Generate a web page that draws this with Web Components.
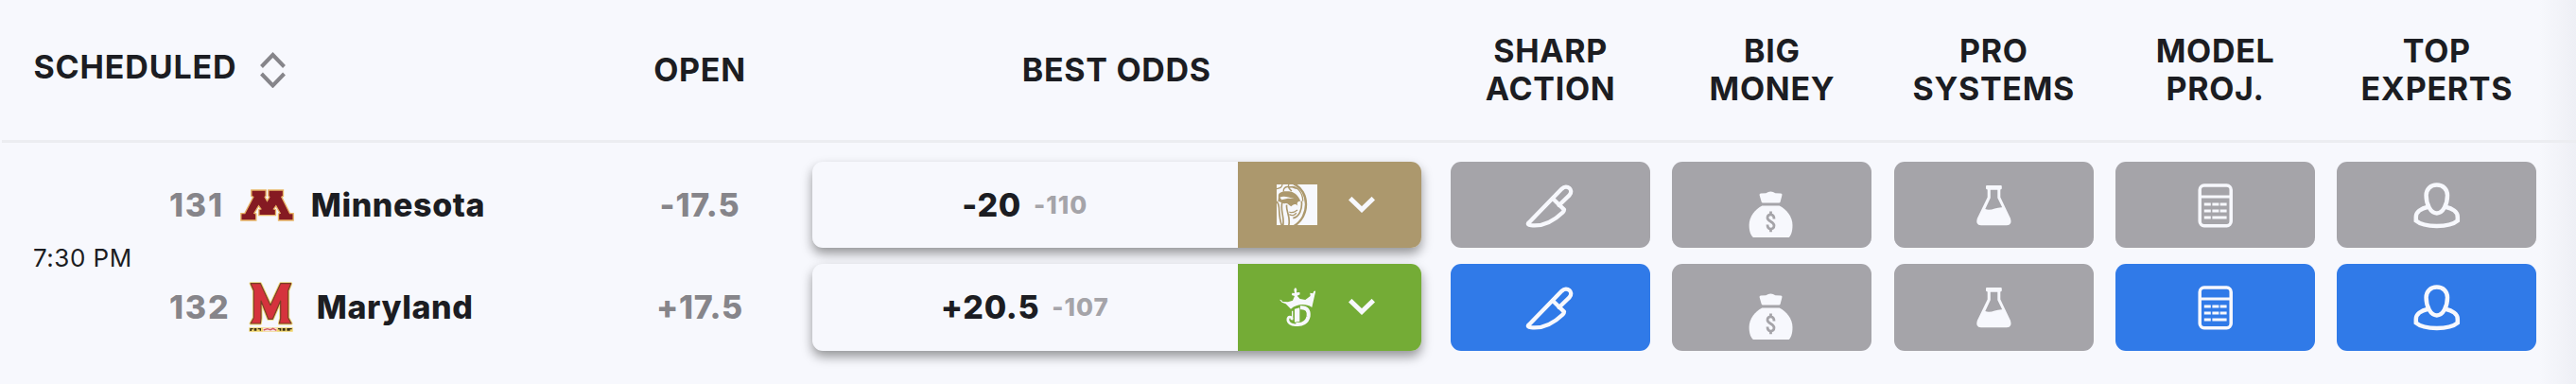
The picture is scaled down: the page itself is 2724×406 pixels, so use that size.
<!DOCTYPE html>
<html lang="en">
<head>
<meta charset="utf-8">
<title>Odds</title>
<style>
  body {
    margin: 0;
    background: #f7f8fd;
    color: #1c1d22;
    font-family: Inter, "Liberation Sans", sans-serif;
    overflow: hidden;
  }
</style>
</head>
<body>
<odds-board>
  <column-head slot="head" align="left" sortable>SCHEDULED</column-head>
  <column-head slot="head">OPEN</column-head>
  <column-head slot="head">BEST ODDS</column-head>
  <column-head slot="head">SHARP<br>ACTION</column-head>
  <column-head slot="head">BIG<br>MONEY</column-head>
  <column-head slot="head">PRO<br>SYSTEMS</column-head>
  <column-head slot="head">MODEL<br>PROJ.</column-head>
  <column-head slot="head">TOP<br>EXPERTS</column-head>

  <game-time>7:30 PM</game-time>

  <team-name number="131" logo="minnesota">Minnesota</team-name>
  <open-line>-17.5</open-line>
  <best-odds line="-20" price="-110" book="betmgm"></best-odds>
  <signal-tile icon="knife"></signal-tile>
  <signal-tile icon="bag"></signal-tile>
  <signal-tile icon="flask"></signal-tile>
  <signal-tile icon="calculator"></signal-tile>
  <signal-tile icon="person"></signal-tile>

  <team-name number="132" logo="maryland">Maryland</team-name>
  <open-line>+17.5</open-line>
  <best-odds line="+20.5" price="-107" book="draftkings"></best-odds>
  <signal-tile icon="knife" active></signal-tile>
  <signal-tile icon="bag"></signal-tile>
  <signal-tile icon="flask"></signal-tile>
  <signal-tile icon="calculator" active></signal-tile>
  <signal-tile icon="person" active></signal-tile>
</odds-board>

<script>
const ICONS = {
  knife: `
    <g fill="none" stroke="currentColor" stroke-width="4.3" stroke-linejoin="round" stroke-linecap="round">
      <path d="M8.4 50.8 L43.6 14.6 C49 9.4 56.6 15.6 51.6 21.4 L40.6 32"/>
      <path d="M34 25 L46 36.6 Q46 38 44.6 39.4 C34 49.6 22 54.4 11 53.2 C8 52.8 7.4 51.8 8.4 50.8"/>
    </g>`,
  bag: `
    <path fill="currentColor" d="M20 19.4 L25.4 19.2 Q30.4 15.6 35.4 19.2 L41 19.4 Q43 19.6 42.4 21.4 L40.6 28.4 Q40.3 29.5 39.2 29.5 L22 29.5 Q21 29.5 20.7 28.4 L18.6 21.2 Q18.3 19.4 20 19.4Z"/>
    <path fill="currentColor" d="M21.4 32.4 H39.6 C47 36 53.5 44 53.5 53 C53.5 59.5 52 64 49.6 66 H12 C9.4 64 7.6 59.5 7.6 53 C7.6 44 14 36 21.4 32.4Z"/>
    <path fill="none" stroke="var(--tile)" stroke-width="2.8" d="M30.5 38.6 V42 M30.5 56.8 V60.2 M34 46.4 C34 40.6 27 40.6 27 45.2 C27 49.4 34 49.2 34 53.6 C34 58.4 27 58.4 27 52.4"/>`,
  flask: `
    <path fill="currentColor" fill-rule="evenodd" d="M25 11 H39.8 Q40.8 11 40.8 12 V14.2 Q40.8 15.2 39.3 15.4 V23.4 L50 46 Q52.2 53 46 53.2 H18.8 Q12.6 53 14.8 46 L25.7 23.4 V15.4 Q24 15.2 24 14.2 V12 Q24 11 25 11Z M28.8 15.8 V24.2 L23.3 36 C29 38.6 34.4 33.8 41.2 34.2 L36.3 24.2 V15.8Z"/>`,
  calculator: `
    <rect x="15.2" y="11.1" width="33" height="42.6" rx="4.6" fill="none" stroke="currentColor" stroke-width="3.5"/>
    <path fill="currentColor" d="M15 21.4 H48 V24.4 H15Z M19.8 29.4 h7 v3 h-7z m8.6 0 h7 v3 h-7z m8.2 0 h7 v3 h-7z M19.8 36.4 h7 v3 h-7z m8.6 0 h7 v3 h-7z m8.2 0 h7 v3 h-7z M19.8 43.4 h7 v3 h-7z m8.6 0 h15.2 v3 h-15.2z"/>`,
  person: `
    <g fill="none" stroke="currentColor" stroke-width="4.5">
      <path d="M31.8 10.6 C38.4 10.6 43 15 43 21.6 C43 31 38.4 40.4 31.8 40.4 C25.2 40.4 20.6 31 20.6 21.6 C20.6 15 25.2 10.6 31.8 10.6Z"/>
      <path d="M22.6 33.8 C15 35.4 9.8 39.4 9.8 44.4 V48.4 C14 52 22 54 31.8 54 C41.6 54 49.6 52 53.8 48.4 V44.4 C53.8 39.4 48.6 35.4 41 33.8"/>
    </g>`
};

const BOOKS = {
  betmgm: `
    <svg width="43.3" height="43.3" viewBox="150 105 130 130">
      <path fill="#f7f8fd" d="M150 105 H280 V235 H150Z"/>
      <g fill="none" stroke="#ac986d">
        <path stroke-width="7" d="M204 103 C256 126 256 208 205 237"/>
        <path stroke-width="4" d="M190 114 C216 106 234 134 233 158 M189 105 C185 112 190 120 198 126 M168 105 C167 114 162 116 150 119 M172 128 C170 110 190 108 212 118"/>
        <path stroke-width="5" d="M150 160 C164 168 152 200 167 237 M168 160 C160 190 176 206 170 237 M182 170 C178 190 196 206 188 237 M229 158 C232 184 222 208 202 212"/>
        <path stroke-width="4" d="M190 192 C200 198 208 192 216 186 M190 200 C200 206 210 202 212 195"/>
      </g>
      <path fill="#ac986d" d="M154 158 C158 142 152 138 160 132 C168 126 176 126 188 127 C204 128 218 138 226 158 C216 158 212 164 218 174 C210 164 202 168 196 175 C188 170 184 162 176 166 C168 166 164 160 154 158Z"/>
      <path fill="#f7f8fd" d="M160 146 C172 140 184 144 206 150 L186 149 L166 154Z"/>
    </svg>`,
  draftkings: `
    <svg width="38.3" height="41.3" viewBox="158 433 115 124">
      <path fill="#f7f8fd" d="M158 471 L164 473 L168 478 L185 479 L200 474 L206 460 L197 457 L198 450 L206 451 L204 439 L209 433 L213 439 L212 449 L222 448 L223 455 L214 459 L223 469 L240 472 L256 460 L255 450 L264 452 L267 445 L273 443 L268 465 L261 496 C240 482 212 486 194 501 L178 485 L166 480Z"/>
      <g fill="none" stroke="#f7f8fd">
        <path stroke-width="12" d="M224 497 C246 495 252 508 250 524 C246 544 230 552 210 550"/>
        <path stroke-width="8" d="M214 552 C194 554 182 544 185 531 C188 524 199 526 197 536"/>
        <path stroke-width="4" d="M199 507 V532"/>
      </g>
      <path fill="#f7f8fd" d="M206 501 L222 497 V541 L206 543Z"/>
    </svg>`
};

const LOGOS = {
  minnesota: `
    <svg width="57" height="34" viewBox="45.5 59 171 102">
      <path fill="#851a22" stroke="#e8b566" stroke-width="4" d="M81 62 H127 V81 L124 84 L131 96 L138 84 L135 81 V62 H182 V81 L177 84 L203 136 H214 V158 H167 V137 L172 135 L159 112 L152 122 L158 124 V142 H105 V124 L111 122 L104 112 L90 135 L96 137 V158 H48 V136 H60 L87 84 L81 81Z"/>
    </svg>`,
  maryland: `
    <svg width="47.4" height="53" viewBox="71 356 142 159">
      <g fill="#d5333d" stroke-linejoin="round">
        <path stroke="#ecd778" stroke-width="9" d="M77 361 H108 L140 430 L172 361 H205 L196 384 V470 L206 488 H168 L172 472 V416 L147 474 H133 L110 416 V472 L108 488 H77 L87 470 V384Z"/>
        <path stroke="#7a3f26" stroke-width="3.5" d="M77 361 H108 L140 430 L172 361 H205 L196 384 V470 L206 488 H168 L172 472 V416 L147 474 H133 L110 416 V472 L108 488 H77 L87 470 V384Z"/>
      </g>
      <path fill="#f0d468" d="M72 501 H211 V514 H72Z"/>
      <path fill="#3c3118" d="M75 503 h10 v4 h-5 v5 h-5z M88 503 h8 v8 h-8z M100 503 h10 v8 h-4 v-4 h-6z M164 503 h10 v8 h-5 v-4 h-5z M178 503 h9 v8 h-9z M192 503 h16 v4 h-6 v4 h-10z"/>
      <path fill="#f7e4e4" d="M116 502 H160 V513 H116Z"/>
      <path fill="none" stroke="#d5585c" stroke-width="4" d="M118 509 L130 505 L140 508 L148 504 L159 510"/>
    </svg>`
};

class OddsBoard extends HTMLElement {
  constructor() {
    super();
    this.attachShadow({ mode: 'open' }).innerHTML = `
      <style>
        :host {
          --columns: 639px 198px 683.5px repeat(5, 234.3px);
          display: block;
          height: 406px;
          padding-left: 2px;
          box-sizing: border-box;
          background: linear-gradient(to right, transparent 2684px, rgba(20, 22, 50, .04) 2724px);
        }
        header {
          display: grid;
          grid-template-columns: var(--columns);
          height: 148px;
          border-bottom: 3px solid #ecedf1;
        }
        .body {
          display: grid;
          grid-template-columns: 177px 462px 198px 683.5px repeat(5, 234.3px);
          grid-template-rows: 91.3px 91.3px;
          row-gap: 17px;
          padding-top: 20px;
        }
        ::slotted(game-time) {
          grid-row: 1 / span 2;
        }
      </style>
      <header><slot name="head"></slot></header>
      <div class="body"><slot></slot></div>
    `;
  }
}

class ColumnHead extends HTMLElement {
  constructor() {
    super();
    this.attachShadow({ mode: 'open' });
  }
  connectedCallback() {
    const sort = this.hasAttribute('sortable') ? `
      <svg width="27" height="38" viewBox="0 0 27 38" fill="none" stroke="#86858a" stroke-width="4">
        <path d="M1.5 15.5 L13.5 3 L25.5 15.5 M1.5 23 L13.5 35.5 L25.5 23"/>
      </svg>` : '';
    this.shadowRoot.innerHTML = `
      <style>
        :host {
          display: flex;
          align-items: center;
          justify-content: center;
          text-align: center;
          font-size: 34px;
          font-weight: 700;
          line-height: 40px;
          letter-spacing: .7px;
        }
        :host([align="left"]) {
          justify-content: flex-start;
          padding-left: 33.5px;
          gap: 24px;
        }
        :host([align="left"]) span {
          padding-bottom: 6px;
          letter-spacing: .85px;
        }
      </style>
      <span><slot></slot></span>${sort}
    `;
  }
}

class GameTime extends HTMLElement {
  constructor() {
    super();
    this.attachShadow({ mode: 'open' }).innerHTML = `
      <style>
        :host {
          display: flex;
          align-items: center;
          padding: 3px 0 0 33px;
          font-size: 26px;
          letter-spacing: .5px;
          white-space: nowrap;
        }
      </style>
      <slot></slot>
    `;
  }
}

class TeamName extends HTMLElement {
  constructor() {
    super();
    this.attachShadow({ mode: 'open' });
  }
  connectedCallback() {
    this.shadowRoot.innerHTML = `
      <style>
        :host {
          display: flex;
          align-items: center;
          font-size: 34px;
          font-weight: 800;
          letter-spacing: .6px;
          white-space: nowrap;
        }
        .number {
          color: #86858a;
          letter-spacing: 1.8px;
        }
        .logo {
          display: flex;
          justify-content: center;
          margin: 0 17.5px 0 17.5px;
        }
        :host([logo="maryland"]) .logo {
          margin: 0 24px 0 20px;
        }
      </style>
      <span class="number">${this.getAttribute('number')}</span>
      <span class="logo">${LOGOS[this.getAttribute('logo')]}</span>
      <span><slot></slot></span>
    `;
  }
}

class OpenLine extends HTMLElement {
  constructor() {
    super();
    this.attachShadow({ mode: 'open' }).innerHTML = `
      <style>
        :host {
          display: flex;
          align-items: center;
          justify-content: center;
          font-size: 34px;
          font-weight: 800;
          letter-spacing: .8px;
          color: #86858a;
        }
      </style>
      <slot></slot>
    `;
  }
}

class BestOdds extends HTMLElement {
  constructor() {
    super();
    this.attachShadow({ mode: 'open' });
  }
  connectedCallback() {
    this.shadowRoot.innerHTML = `
      <style>
        :host {
          display: flex;
          margin: 0 19.8px 0 19.6px;
          border-radius: 11px;
          overflow: hidden;
          background: #f7f8fd;
          box-shadow: 0 6px 12px rgba(0, 0, 0, .4);
          font-weight: 800;
          letter-spacing: .7px;
        }
        .odds {
          flex: 1;
          display: flex;
          align-items: center;
          justify-content: center;
          gap: 13px;
          font-size: 34px;
        }
        .price {
          font-size: 26px;
          letter-spacing: 1px;
          color: #a5a4a9;
        }
        .book {
          display: flex;
          align-items: center;
          width: 193.7px;
          background: #ac986d;
        }
        :host([book="draftkings"]) .book {
          background: #74ac36;
        }
        .mark {
          display: flex;
          justify-content: center;
          width: 43.3px;
          margin: 0 33px 0 41px;
        }
      </style>
      <div class="odds">
        <span>${this.getAttribute('line')}</span>
        <span class="price">${this.getAttribute('price')}</span>
      </div>
      <div class="book">
        <span class="mark">${BOOKS[this.getAttribute('book')]}</span>
        <svg width="28" height="17" viewBox="0 0 28 17" fill="none" stroke="#f7f8fd" stroke-width="5">
          <path d="M1.7 1.7 L14 13.5 L26.3 1.7"/>
        </svg>
      </div>
    `;
  }
}

class SignalTile extends HTMLElement {
  constructor() {
    super();
    this.attachShadow({ mode: 'open' });
  }
  connectedCallback() {
    this.shadowRoot.innerHTML = `
      <style>
        :host {
          --tile: #a5a4a9;
          display: flex;
          align-items: center;
          justify-content: center;
          margin: 0 11.7px;
          border-radius: 11px;
          background: var(--tile);
          color: #f7f8fd;
        }
        :host([active]) {
          --tile: #307ae8;
        }
        svg {
          overflow: visible;
        }
      </style>
      <svg width="64" height="64" viewBox="0 0 64 64">${ICONS[this.getAttribute('icon')]}</svg>
    `;
  }
}

customElements.define('odds-board', OddsBoard);
customElements.define('column-head', ColumnHead);
customElements.define('game-time', GameTime);
customElements.define('team-name', TeamName);
customElements.define('open-line', OpenLine);
customElements.define('best-odds', BestOdds);
customElements.define('signal-tile', SignalTile);
</script>
</body>
</html>
